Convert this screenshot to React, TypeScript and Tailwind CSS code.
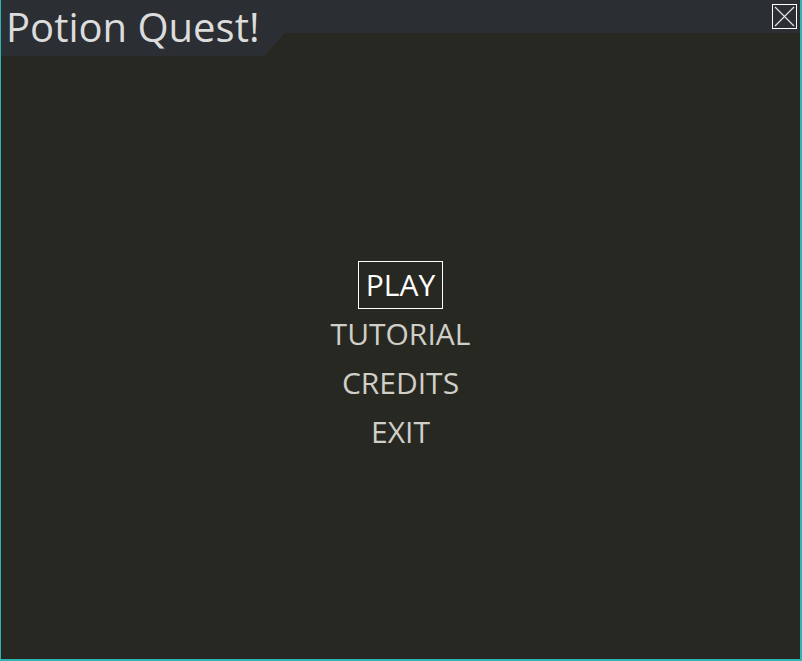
import React from "react";

const items = ["PLAY", "TUTORIAL", "CREDITS", "EXIT"];

export default function App() {
  return (
    <div
      className="w-[802px] h-[661px] bg-[#282823] border-l border-r-2 border-b-2 border-[#2fb4b4] flex flex-col overflow-hidden"
      style={{ fontFamily: '"Open Sans", "Noto Sans", sans-serif' }}
    >
      <div className="relative h-[33px] bg-[#2b2e33] flex items-start justify-end shrink-0">
        <div className="absolute left-0 top-0 w-[284px] h-[56px] bg-[#2b2e33] [clip-path:polygon(0_0,100%_0,100%_33px,263px_56px,0_56px)] z-10">
          <div className="pl-[5px] pt-[3px] text-[40px] leading-[48px] text-[#dcdcdc]">Potion Quest!</div>
        </div>
        <button className="mt-[4px] mr-[3px] w-[25px] h-[25px] border border-white flex items-center justify-center">
          <svg width="23" height="23" viewBox="0 0 23 23">
            <path d="M2 2 L21 21 M21 2 L2 21" stroke="#e0e0e0" strokeWidth="1.2" />
          </svg>
        </button>
      </div>
      <div className="flex-1 flex flex-col items-center pt-[227px]">
        {items.map((it, i) => (
          <div key={it} className="h-[49px] flex items-center justify-center">
            {i === 0 ? (
              <div className="h-[48px] px-[7px] border border-white flex items-center text-[30px] text-white">
                {it}
              </div>
            ) : (
              <div className="text-[30px] text-[#cfcfc7]">{it}</div>
            )}
          </div>
        ))}
      </div>
    </div>
  );
}
